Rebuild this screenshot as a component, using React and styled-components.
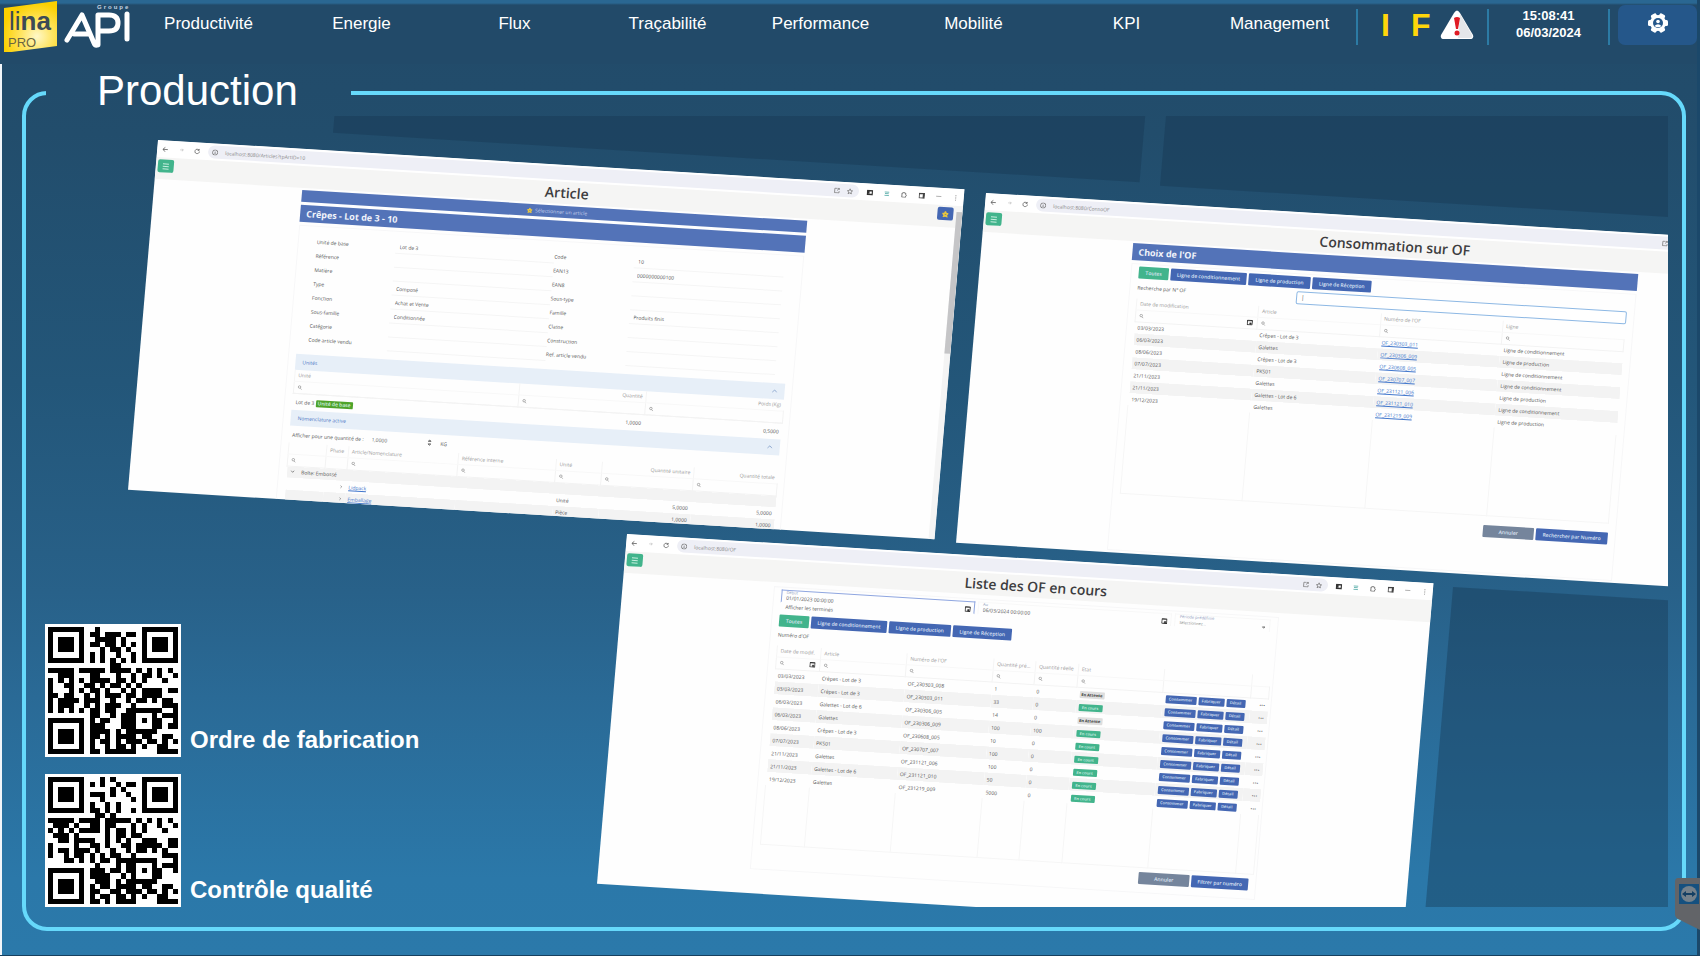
import styled, { createGlobalStyle, css } from "styled-components";

const GlobalStyle = createGlobalStyle`
  * {
    box-sizing: border-box;
  }
  body {
    margin: 0;
    background: #2b79aa;
    font-family: "Liberation Sans", Arial, sans-serif;
  }
  button,
  input,
  select {
    font-family: inherit;
    margin: 0;
  }
`;

/* ---------- page shell ---------- */

const Page = styled.div`
  min-height: 100vh;
  display: flex;
  flex-direction: column;
  overflow: hidden;
  background: linear-gradient(
    #224a69 0%,
    #224d6c 14%,
    #235679 40%,
    #286189 62%,
    #2a6a96 73%,
    #2b78a9 92%,
    #2b79aa 100%
  );
  border-right: 3px solid #1b486a;
  border-bottom: 1px solid #17405f;
`;

const Header = styled.header`
  height: 64px;
  display: flex;
  align-items: flex-start;
  background: linear-gradient(#2a6792 0, #2a6792 3px, #224a69 5px);
`;

const Brand = styled.a`
  flex: none;
  width: 132px;
  height: 52px;
`;

const Nav = styled.nav`
  flex: 1;
  display: grid;
  grid-template-columns: repeat(8, 1fr);
  padding-top: 13px;
`;

const NavLink = styled.a`
  color: #fff;
  font-size: 17px;
  line-height: 21px;
  text-align: center;
  text-decoration: none;
`;

const HeaderCell = styled.div`
  height: 36px;
  margin-top: 9px;
  padding-bottom: 6px;
  display: flex;
  align-items: center;
  justify-content: center;
  width: ${({ $width }) => $width}px;
  border-left: 2px solid #2c7ba5;
`;

const Flags = styled(HeaderCell)`
  display: grid;
  grid-template-columns: 30px 29px 34px;
  justify-content: start;
  padding-left: 23px;
`;

const Flag = styled.button`
  border: 0;
  padding: 0;
  background: none;
  color: #ffd60a;
  font-size: 32px;
  line-height: 32px;
  font-weight: 700;
  text-align: left;
`;

const Clock = styled.time`
  color: #fff;
  font-size: 13px;
  line-height: 17px;
  font-weight: 700;
  text-align: center;
`;

const SettingsButton = styled.button`
  width: 79px;
  height: 40px;
  margin-top: 5px;
  padding: 0 0 4px;
  border: 0;
  border-radius: 7px;
  background: #25578a;
  display: flex;
  align-items: center;
  justify-content: center;
`;

const Main = styled.main`
  flex: 1;
  display: flex;
  padding: 6px 11px 24px 20px;
  border-left: 2px solid #f2f6fa;
`;

const Panel = styled.fieldset`
  flex: 1;
  min-width: 0;
  display: flex;
  margin: 0;
  padding: 0;
  border: 4px solid #66d9fb;
  border-radius: 25px;
`;

const PanelTitle = styled.legend`
  margin-left: 20px;
  padding: 0 53px 4px 51px;
  color: #fff;
  font-size: 42px;
  line-height: 42px;
`;

const Board = styled.div`
  flex: 1;
  min-width: 0;
  display: grid;
  grid-template: 1fr / 1fr;
  padding: 0 14px 20px 0;
`;

const Canvas = styled.div`
  grid-area: 1 / 1;
  position: relative;
  overflow: hidden;
`;

const Codes = styled.div`
  grid-area: 1 / 1;
  align-self: end;
  justify-self: start;
  position: relative;
  display: grid;
  gap: 17px;
  padding-left: 19px;
`;

const CodeItem = styled.figure`
  margin: 0;
  display: flex;
  align-items: flex-end;
  gap: 9px;
`;

const CodeLabel = styled.figcaption`
  color: #fff;
  font-size: 24px;
  line-height: 35px;
  font-weight: 700;
`;

const RemoteTab = styled.button`
  position: absolute;
  right: 0;
  top: 877px;
  width: 26px;
  height: 54px;
  padding: 0;
  border: 0;
  background: none;
`;

/* ---------- tilted browser windows ---------- */

const tilted = css`
  position: absolute;
  left: ${({ $x }) => $x}px;
  top: ${({ $y }) => $y}px;
  width: 808px;
  height: 351px;
  transform: rotate(3.5deg) skewX(-1.4deg);
  transform-origin: 0 0;
`;

const Ghost = styled.div`
  ${tilted}
  background: rgba(22, 52, 78, 0.38);
`;

const Browser = styled.section`
  ${tilted}
  overflow: hidden;
  background: #fefefe;
  color: #555;
  font: 5px/8px "Open Sans", "Noto Sans", sans-serif;
`;

const Chrome = styled.div`
  height: 17px;
  display: flex;
  align-items: center;
  justify-content: space-between;
  padding: 0 5px;
  background: #fff;
`;

const ChromeIcons = styled.div`
  width: ${({ $width }) => $width}px;
  display: flex;
  align-items: center;
  justify-content: space-between;
`;

const AddressBar = styled.div`
  flex: 1;
  height: 13px;
  margin: 0 8px;
  padding: 0 6px 0 4px;
  display: flex;
  align-items: center;
  gap: 7px;
  border-radius: 7px;
  background: #eeeff6;
  color: #888;
`;

const Spacer = styled.span`
  flex: 1;
`;

const Banner = styled.div`
  height: 22px;
  display: flex;
  justify-content: space-between;
  padding: 2px 8px 0 2px;
  background: #f5f5f4;
`;

const BannerTitle = styled.h2`
  margin: 0;
  padding-left: 22px;
  color: #3d3d3f;
  font-size: 14px;
  line-height: 17px;
  font-weight: 600;
`;

const BannerSide = styled.div`
  width: 17px;
`;

const IconButton = styled.button`
  width: 16px;
  height: 13px;
  display: flex;
  align-items: center;
  justify-content: center;
  padding: 0;
  border: 0;
  border-radius: 2px;
  background: ${({ $color }) => $color};
`;

const Viewport = styled.div`
  display: flex;
  height: 313px;
`;

const Scrollbar = styled.div`
  width: 6px;
  margin-top: -16px;
  border-top: 142px solid #c5c5c7;
  background: #f4f4f4;
`;

const Card = styled.div`
  width: 506px;
  margin: ${({ $top }) => $top}px auto 0;
`;

const TitleBar = styled.div`
  display: flex;
  align-items: center;
  justify-content: ${({ $center }) => ($center ? "center" : "flex-start")};
  gap: 3px;
  height: ${({ $height }) => $height}px;
  margin-bottom: 3px;
  padding-left: 6px;
  background: #5373b8;
  color: ${({ $center }) => ($center ? "#c5d0ea" : "#f1f4fb")};
  font-size: ${({ $center }) => ($center ? 5 : 9)}px;
  font-weight: ${({ $center }) => ($center ? 400 : 700)};
`;

const CardBody = styled.div`
  height: ${({ $height }) => $height}px;
  padding: 2px 7px 0;
  border: 1px solid #f7f7f8;
`;

const ButtonRow = styled.div`
  display: flex;
  gap: 2px;
  justify-content: ${({ $end }) => ($end ? "flex-end" : "flex-start")};
  margin-top: ${({ $top }) => $top || 0}px;
`;

const Button = styled.button`
  width: ${({ $width }) => $width}px;
  height: ${({ $small }) => ($small ? 8 : 12)}px;
  padding: 0;
  border: 0;
  border-radius: 1px;
  background: ${({ $color }) => $color || "#4467b3"};
  color: #dfe6f5;
  font-size: ${({ $small }) => ($small ? 4 : 5)}px;
  font-weight: 600;
  line-height: 8px;
  white-space: nowrap;
`;

const Form = styled.div`
  display: grid;
  grid-template-columns: 79px 159px 80px 150px;
  grid-auto-flow: column;
  grid-template-rows: repeat(8, 14px);
  padding: 6px 0 8px 11px;
`;

const FieldLabel = styled.label`
  align-self: center;
`;

const FieldInput = styled.input`
  width: 100%;
  padding: 0 4px;
  border: 0;
  border-bottom: 1px solid #f5f5f5;
  background: none;
  color: #555;
  font-size: 5px;
`;

const Section = styled.div`
  height: 16px;
  display: flex;
  align-items: center;
  justify-content: space-between;
  padding: 0 7px;
  background: #e7eff8;
  color: #4a74c4;
`;

const Quantity = styled.label`
  height: 17px;
  display: flex;
  align-items: center;
  gap: 8px;
  padding-left: 3px;
`;

const QuantityInput = styled.input`
  width: 46px;
  padding: 0;
  border: 0;
  background: none;
  color: #666;
  font-size: 5px;
`;

const Table = styled.table`
  width: 100%;
  table-layout: fixed;
  border-collapse: collapse;
  tbody tr {
    height: ${({ $row }) => $row}px;
  }
  tbody tr:nth-child(${({ $stripe }) => $stripe || "even"}) {
    background: #f3f3f3;
  }
`;

const Th = styled.th`
  height: 11px;
  padding: 0 3px;
  overflow: hidden;
  color: #999;
  font-weight: 400;
  text-align: ${({ $align }) => $align || "left"};
  text-overflow: ellipsis;
  white-space: nowrap;
  border-left: 1px solid #f5f5f5;
`;

const Filter = styled.td`
  height: 12px;
  padding: 0 4px 0 3px;
  border: 1px solid #f3f3f3;
  border-top-color: #f8f8f8;
  > div {
    display: flex;
    align-items: center;
    justify-content: space-between;
  }
`;

const Td = styled.td`
  padding: 0 3px;
  overflow: hidden;
  text-align: ${({ $align }) => $align || "left"};
  white-space: nowrap;
`;

const FillerRow = styled.tr`
  &&&& {
    height: ${({ $height }) => $height}px;
    background: none;
  }
  td {
    border: 1px solid #f6f6f6;
    border-top: 0;
  }
`;

const Link = styled.a`
  color: #4277cc;
`;

const Badge = styled.span`
  display: inline-block;
  min-width: 24px;
  padding: 0 2px;
  border-radius: 1px;
  background: ${({ $color }) => $color || "#42b48c"};
  color: ${({ $dark }) => ($dark ? "#333" : "#d9f3e9")};
  font-size: ${({ $big }) => ($big ? 5 : 4)}px;
  font-weight: ${({ $dark }) => ($dark ? 700 : 600)};
  line-height: 7px;
  text-align: center;
`;

const SearchField = styled.div`
  display: flex;
  align-items: center;
  justify-content: space-between;
  height: 18px;
`;

const SearchInput = styled.input`
  width: 331px;
  height: 13px;
  padding: 0 4px;
  border: 1px solid #8db8e4;
  border-radius: 2px;
  background: #fff;
  color: #555;
  font-size: 6px;
`;

const Period = styled.div`
  display: grid;
  grid-template-columns: 194px 194px 1fr;
  gap: 3px;
`;

const DateBox = styled.label`
  height: 13px;
  display: flex;
  flex-wrap: wrap;
  align-items: center;
  justify-content: space-between;
  padding: 0 3px 0 4px;
  border: 1px solid ${({ $active }) => ($active ? "#8fa6e0" : "#f8f8f8")};
  border-bottom-color: transparent;
`;

const Caption = styled.span`
  width: 100%;
  color: #8f9bbd;
  font-size: 4px;
  line-height: 3px;
`;

const DateInput = styled.input`
  width: 90px;
  padding: 0;
  border: 0;
  background: none;
  color: #555;
  font-size: 5px;
  line-height: 7px;
`;

const PeriodSelect = styled.select`
  width: 76px;
  height: 8px;
  padding: 0;
  border: 0;
  appearance: none;
  background: none;
  color: #888;
  font-size: 4px;
`;

const Note = styled.p`
  margin: ${({ $top }) => $top || 0}px 0 0;
  padding-left: ${({ $indent }) => $indent || 0}px;
  height: ${({ $height }) => $height || 8}px;
`;

/* ---------- drawings ---------- */

const Stroke = ({ d, size = 6, color = "#555", width = 2 }) => (
  <svg
    width={size}
    height={size}
    viewBox="0 0 16 16"
    fill="none"
    stroke={color}
    strokeWidth={width}
    aria-hidden="true"
  >
    <path d={d} />
  </svg>
);

const icons = {
  back: "M15 8H2M8 2L2 8l6 6",
  forward: "M3 8h10M9 4l4 4-4 4",
  reload: "M14 8a6 6 0 1 1-2-4.500M13 1v4H9",
  info: "M8 1a7 7 0 1 0 0 14A7 7 0 0 0 8 1M8 7v5M8 4v1",
  share: "M9 2H2v12h12V9M8 8l6-6M10 2h4v4",
  star: "M8 1l2 5 5 .500-4 3.500 1.500 5L8 12l-4.500 3L5 10 1 6.500 6 6z",
  puzzle: "M3 4h3a2 2 0 0 1 4 0h3v4a2 2 0 0 1 0 4v3H3z",
  dots: "M8 1v3M8 7v3M8 13v3",
  search: "M7 2a4 4 0 1 0 0 8 4 4 0 0 0 0-8M10 10l4 4",
  up: "M2 11l6-6 6 6",
  down: "M3 6l5 5 5-5",
  right: "M6 3l5 5-5 5",
  menu: "M2 3h12M2 8h12M2 13h12",
};

const Calendar = () => (
  <svg width="6" height="6" viewBox="0 0 12 12" aria-hidden="true">
    <rect x="1" y="2" width="10" height="9" rx="1" fill="none" stroke="#333" strokeWidth="2" />
    <path d="M1 3h10M6 7h3v3H6z" fill="#333" stroke="#333" />
  </svg>
);

const BrandLogo = () => (
  <svg width="132" height="52" viewBox="0 0 132 52" role="img" aria-label="lina PRO, Groupe API">
    <defs>
      <radialGradient id="glow" cx="62%" cy="68%" r="65%">
        <stop offset="0" stopColor="#fff8c8" />
        <stop offset="0.450" stopColor="#ffe564" />
        <stop offset="1" stopColor="#fbd000" />
      </radialGradient>
    </defs>
    <path d="M4 8L57 1v45L4 53z" fill="url(#glow)" />
    <text x="9" y="30" fontFamily="Liberation Sans, sans-serif" fontSize="26" fill="#3c4a55">
      li<tspan fontWeight="700">na</tspan>
    </text>
    <text x="8" y="47" fontFamily="Liberation Sans, sans-serif" fontSize="13" fill="#6b6540">
      PRO
    </text>
    <text x="97" y="9" fontFamily="Liberation Sans, sans-serif" fontSize="6" fontWeight="700" letterSpacing="2" fill="#c8d6e2">
      Groupe
    </text>
    <g fill="none" stroke="#fff" strokeWidth="5" strokeLinejoin="round" strokeLinecap="round">
      <path d="M67 40L82 15L94 43Q95 46 98 45V15H109Q118 15 118 23T109 31H101" />
      <path d="M74 34h14" />
      <path d="M127 14v25" />
    </g>
  </svg>
);

const WarningIcon = () => (
  <svg width="34" height="30" viewBox="0 0 34 30" role="img" aria-label="Alerte">
    <path d="M14 3q3-5 6 0l13 22q1 4-3 4H4q-4 0-3-4z" fill="#fff" />
    <path d="M20 4l12 21q1 3-2 3H18z" fill="#e4e6e9" />
    <path d="M14 8q3-2 6 0l-2 11h-2z" fill="#e01b24" />
    <circle cx="17" cy="23" r="2.500" fill="#e01b24" />
  </svg>
);

const teeth = [0, 60, 120, 180, 240, 300];

const GearIcon = () => (
  <svg width="22" height="20" viewBox="-11 -10 22 20" aria-hidden="true">
    <circle r="8" fill="#fff" />
    {teeth.map((angle) => (
      <rect key={angle} x="-3" y="-10" width="6" height="6" rx="1.500" fill="#fff" transform={`rotate(${angle + 30})`} />
    ))}
    <circle r="5" fill="#25578a" />
    <circle cy="-1.500" r="1.800" fill="#fff" />
    <path d="M-3.500 3q3.500-3.500 7 0q-3.500 2.500-7 0" fill="#fff" />
  </svg>
);

const RemoteIcon = () => (
  <svg width="26" height="54" viewBox="0 0 26 54" aria-hidden="true">
    <path d="M4 1h22v52L6 43q-5-2-5-6V5q0-4 3-4z" fill="#626468" />
    <rect x="5" y="7" width="20" height="20" fill="#15507f" />
    <circle cx="15" cy="17" r="8" fill="#75818b" />
    <path d="M8 17l4-3v2h6v-2l4 3-4 3v-2h-6v2z" fill="#153f63" />
  </svg>
);

// columns 8-16 of the top rows, full middle rows, columns 8-24 of the bottom rows
const orderCode = {
  top: [".#.......", "##.###.##", ".####.#..", "##.##.#.#", "..#.##.#.", "#.#..#..#", "#.#.#.#.#", "....##..."],
  middle: [
    "#####.#####.####.#.#.#.#.",
    "..###...##...#..#.##.#..#",
    "#.#.#.#.####.##.#.#...#..",
    "#..##..##.#.##.#.#.......",
    "#...#.#.##.#..#.#.####.##",
    "##.##..#.#.###.##.####...",
    "#.####.###..#..#.##.#.##.",
    "#.###..#.#.###..#.....###",
    "#.#.#.#.##.##..#######..#",
  ],
  bottom: [
    "##..#.###...#.###",
    "#.##..###.#.##..#",
    "###...###...##.##",
    "####.#.######....",
    "##.#.####.##..##.",
    "#.##.#.###.##.#.#",
    "#..#.##.#.#..##..",
    "##.######....####",
  ],
};

const qualityCode = {
  top: ["..#.#....", "#.#..#.##", "....#.#..", "###.#..#.", "..#.....#", "#..#.#...", "##.#.#..#", ".##.#...."],
  middle: [
    "#####.####.#####.#.#.#.#.",
    ".###.#..##.##...#.#..#..#",
    "#.#.#.####.#.##.#.#...#..",
    ".###.#.....#.##.##.......",
    "..##.####..#.#.#..###..##",
    "#....#..##.#..##.#####.##",
    "#.##.###.#..#..#.##.#.#..",
    "#..#.##.#.#.##..#.....###",
    "...##.#.#.##.########...#",
  ],
  bottom: [
    ".#...#.##...#.###",
    "###.##.##.#.##..#",
    "####..#.#...##...",
    ".###.#.######....",
    "#.##.####.##..##.",
    "##..##.###.##.#.#",
    "#.##.##.#.#..##..",
    "##.#.####....####",
  ],
};

const Finder = ({ x, y }) => (
  <g transform={`translate(${x} ${y})`}>
    <path d="M0 0h7v7H0z" fill="#000" />
    <path d="M1 1h5v5H1z" fill="#fff" />
    <path d="M2 2h3v3H2z" fill="#000" />
  </g>
);

const QrCode = ({ code, label }) => {
  const cells = [];
  const add = (line, row, offset) =>
    [...line].forEach((cell, i) => {
      if (cell === "#") cells.push(`M${i + offset} ${row}h1v1h-1z`);
    });
  code.top.forEach((line, i) => add(line, i, 8));
  code.middle.forEach((line, i) => add(line, i + 8, 0));
  code.bottom.forEach((line, i) => add(line, i + 17, 8));
  return (
    <svg width="136" height="133" viewBox="-0.600 -0.600 26.200 26.200" preserveAspectRatio="none" shapeRendering="crispEdges" role="img" aria-label={label}>
      <path d="M-1-1h28v28H-1z" fill="#fff" />
      <path d={cells.join("")} fill="#000" />
      <Finder x={0} y={0} />
      <Finder x={18} y={0} />
      <Finder x={0} y={18} />
    </svg>
  );
};

/* ---------- window contents ---------- */

const menu = [
  "Productivité",
  "Energie",
  "Flux",
  "Traçabilité",
  "Performance",
  "Mobilité",
  "KPI",
  "Management",
];

const lines = [
  ["Ligne de conditionnement", 76],
  ["Ligne de production", 62],
  ["Ligne de Réception", 59],
];

const leftFields = [
  ["Unité de base", "Lot de 3"],
  ["Référence", ""],
  ["Matière", ""],
  ["Type", "Composé"],
  ["Fonction", "Achat et Vente"],
  ["Sous-famille", "Conditionnée"],
  ["Catégorie", ""],
  ["Code article vendu", ""],
];

const rightFields = [
  ["Code", "10"],
  ["EAN13", "0000000000100"],
  ["EAN8", ""],
  ["Sous-type", ""],
  ["Famille", "Produits finis"],
  ["Classe", ""],
  ["Construction", ""],
  ["Ref. article vendu", ""],
];

const consumptionRows = [
  ["03/03/2023", "Crêpes - Lot de 3", "OF_230303_011", "Ligne de conditionnement"],
  ["06/03/2023", "Galettes", "OF_230306_009", "Ligne de production"],
  ["08/06/2023", "Crêpes - Lot de 3", "OF_230608_005", "Ligne de conditionnement"],
  ["07/07/2023", "PKS01", "OF_230707_007", "Ligne de conditionnement"],
  ["21/11/2023", "Galettes", "OF_231121_006", "Ligne de production"],
  ["21/11/2023", "Galettes - Lot de 6", "OF_231121_010", "Ligne de conditionnement"],
  ["19/12/2023", "Galettes", "OF_231219_009", "Ligne de production"],
];

const orderRows = [
  ["03/03/2023", "Crêpes - Lot de 3", "OF_230303_008", "1", "0", false],
  ["03/03/2023", "Crêpes - Lot de 3", "OF_230303_011", "33", "0", true],
  ["06/03/2023", "Galettes - Lot de 6", "OF_230306_005", "14", "0", false],
  ["06/03/2023", "Galettes", "OF_230306_009", "100", "100", true],
  ["08/06/2023", "Crêpes - Lot de 3", "OF_230608_005", "10", "0", true],
  ["07/07/2023", "PKS01", "OF_230707_007", "100", "0", true],
  ["21/11/2023", "Galettes", "OF_231121_006", "100", "0", true],
  ["21/11/2023", "Galettes - Lot de 6", "OF_231121_010", "50", "0", true],
  ["19/12/2023", "Galettes", "OF_231219_009", "5000", "0", true],
];

const Columns = ({ widths }) => (
  <colgroup>
    {widths.map((width, i) => (
      <col key={i} width={width} />
    ))}
  </colgroup>
);

const Filters = ({ count, calendar, empty = [] }) => (
  <tr>
    {Array.from({ length: count }, (_, i) => (
      <Filter key={i}>
        <div>
          {!empty.includes(i) && <Stroke d={icons.search} size={5} color="#888" />}
          {calendar && i === 0 && <Calendar />}
        </div>
      </Filter>
    ))}
  </tr>
);

const Fields = ({ items, prefix }) => (
  <>
    {items.map(([label]) => (
      <FieldLabel key={label} htmlFor={`${prefix}-${label}`}>
        {label}
      </FieldLabel>
    ))}
    {items.map(([label, value]) => (
      <FieldInput key={label} id={`${prefix}-${label}`} defaultValue={value} />
    ))}
  </>
);

const LineButtons = ({ top }) => (
  <ButtonRow $top={top}>
    <Button $width={30} $color="#42b48c">
      Toutes
    </Button>
    {lines.map(([label, width]) => (
      <Button key={label} $width={width}>
        {label}
      </Button>
    ))}
  </ButtonRow>
);

const BrowserWindow = ({ x, y, url, title, starred, children }) => (
  <Browser $x={x} $y={y}>
    <Chrome>
      <ChromeIcons $width={38}>
        <Stroke d={icons.back} />
        <Stroke d={icons.forward} size={5} color="#bbb" />
        <Stroke d={icons.reload} />
      </ChromeIcons>
      <AddressBar>
        <Stroke d={icons.info} color="#666" />
        {url}
        <Spacer />
        <Stroke d={icons.share} color="#777" />
        <Stroke d={icons.star} color="#777" />
      </AddressBar>
      <ChromeIcons $width={92}>
        <Stroke d="M1 3h14v10H1zM5 5v6" color="#333" width={4} />
        <Stroke d="M2 4h12M3 8h10M2 13h12" color="#4aa6a2" />
        <Stroke d={icons.puzzle} />
        <Stroke d="M1 2h14v12H1zM12 3v10" color="#444" width={3} />
        <Stroke d="M1 7h14" color="#999" />
        <Stroke d={icons.dots} color="#777" />
      </ChromeIcons>
    </Chrome>
    <Banner>
      <BannerSide>
        <IconButton $color="#42b48c" aria-label="Menu">
          <Stroke d={icons.menu} size={8} color="#c6eedf" />
        </IconButton>
      </BannerSide>
      <BannerTitle>{title}</BannerTitle>
      <BannerSide>
        {starred && (
          <IconButton $color="#4467b3" aria-label="Favori">
            <Stroke d={icons.star} size={6} color="#e8c63f" width={4} />
          </IconButton>
        )}
      </BannerSide>
    </Banner>
    {children}
  </Browser>
);

const ArticleWindow = () => (
  <BrowserWindow x={132} y={24} url="localhost:8080/Articles?tpArtID=10" title="Article" starred>
    <Viewport>
      <Card $top={2}>
        <TitleBar $center $height={12}>
          <Stroke d={icons.star} size={5} color="#e8c63f" width={4} />
          Sélectionner un article
        </TitleBar>
        <TitleBar $height={17}>Crêpes - Lot de 3 - 10</TitleBar>
        <CardBody $height={290}>
          <Form>
            <Fields items={leftFields} prefix="left" />
            <Fields items={rightFields} prefix="right" />
          </Form>
          <Section>
            Unités
            <Stroke d={icons.up} color="#7f9cc9" />
          </Section>
          <Table $row={17}>
            <Columns widths={[225, 127, 138]} />
            <thead>
              <tr>
                <Th>Unité</Th>
                <Th $align="right">Quantité</Th>
                <Th $align="right">Poids (Kg)</Th>
              </tr>
              <Filters count={3} />
            </thead>
            <tbody>
              <tr>
                <Td>
                  Lot de 3{" "}
                  <Badge $big $color="#4ea32a">
                    Unité de base
                  </Badge>
                </Td>
                <Td $align="right">1,0000</Td>
                <Td $align="right">0,5000</Td>
              </tr>
            </tbody>
          </Table>
          <Section>
            Nomenclature active
            <Stroke d={icons.up} color="#7f9cc9" />
          </Section>
          <Quantity>
            Afficher pour une quantité de :
            <QuantityInput defaultValue="1,0000" />
            <Stroke d="M5 5l3-3 3 3zM5 11l3 3 3-3z" color="#555" size={7} />
            KG
          </Quantity>
          <Table $row={12} $stripe="odd">
            <Columns widths={[38, 22, 110, 98, 46, 92, 84]} />
            <thead>
              <tr>
                <Th />
                <Th>Phase</Th>
                <Th>Article/Nomenclature</Th>
                <Th>Référence interne</Th>
                <Th>Unité</Th>
                <Th $align="right">Quantité unitaire</Th>
                <Th $align="right">Quantité totale</Th>
              </tr>
              <Filters count={7} empty={[1]} />
            </thead>
            <tbody>
              <tr>
                <Td colSpan={7}>
                  <Stroke d={icons.down} size={5} /> &nbsp; &nbsp; Boîte: Embossé
                </Td>
              </tr>
              <tr>
                <Td />
                <Td $align="right">
                  <Stroke d={icons.right} size={4} />
                </Td>
                <Td>
                  <Link href="#lidpack">Lidpack</Link>
                </Td>
                <Td />
                <Td>Unité</Td>
                <Td $align="right">5,0000</Td>
                <Td $align="right">5,0000</Td>
              </tr>
              <tr>
                <Td />
                <Td $align="right">
                  <Stroke d={icons.right} size={4} />
                </Td>
                <Td>
                  <Link href="#emballage">Emballage</Link>
                </Td>
                <Td />
                <Td>Pièce</Td>
                <Td $align="right">1,0000</Td>
                <Td $align="right">1,0000</Td>
              </tr>
            </tbody>
          </Table>
        </CardBody>
      </Card>
      <Scrollbar />
    </Viewport>
  </BrowserWindow>
);

const ConsumptionWindow = () => (
  <BrowserWindow x={960} y={77} url="localhost:8080/ConsoOF" title="Consommation sur OF">
    <Card $top={2}>
      <TitleBar $height={17}>Choix de l'OF</TitleBar>
      <CardBody $height={288}>
        <LineButtons />
        <SearchField>
          <label htmlFor="of">Recherche par N° OF</label>
          <SearchInput id="of" defaultValue="|" />
        </SearchField>
        <Note $height={2} />
        <Table $row={12}>
          <thead>
            <tr>
              <Th>Date de modification</Th>
              <Th>Article</Th>
              <Th>Numéro de l'OF</Th>
              <Th>Ligne</Th>
            </tr>
            <Filters count={4} calendar />
          </thead>
          <tbody>
            {consumptionRows.map(([date, article, order, line]) => (
              <tr key={order}>
                <Td>{date}</Td>
                <Td>{article}</Td>
                <Td>
                  <Link href={`#${order}`}>{order}</Link>
                </Td>
                <Td>{line}</Td>
              </tr>
            ))}
            <FillerRow $height={88}>
              <td />
              <td />
              <td />
              <td />
            </FillerRow>
          </tbody>
        </Table>
        <ButtonRow $end $top={9}>
          <Button $width={51} $color="#75859c">
            Annuler
          </Button>
          <Button $width={72}>Rechercher par Numéro</Button>
        </ButtonRow>
      </CardBody>
    </Card>
  </BrowserWindow>
);

const OrdersWindow = () => (
  <BrowserWindow x={601} y={418} url="localhost:8080/OF" title="Liste des OF en cours">
    <Card $top={4}>
      <CardBody $height={284}>
        <Period>
          <DateBox $active>
            <Caption>Début</Caption>
            <DateInput defaultValue="01/01/2023 00:00:00" />
            <Calendar />
          </DateBox>
          <DateBox>
            <Caption>Au</Caption>
            <DateInput defaultValue="06/03/2024 00:00:00" />
            <Calendar />
          </DateBox>
          <DateBox>
            <Caption>Période prédéfinie</Caption>
            <PeriodSelect>
              <option>Sélectionnez...</option>
            </PeriodSelect>
            <Stroke d="M4 6h8l-4 4z" size={5} color="#444" />
          </DateBox>
        </Period>
        <Note $indent={5} $height={10}>
          Afficher les terminés
        </Note>
        <LineButtons top={2} />
        <Note $top={4} $height={15}>
          Numéro d'OF
        </Note>
        <Table $row={13}>
          <Columns widths={[44, 86, 87, 42, 43, 86, 88, 18]} />
          <thead>
            <tr>
              <Th>Date de modif.</Th>
              <Th>Article</Th>
              <Th>Numéro de l'OF</Th>
              <Th>Quantité prévue</Th>
              <Th>Quantité réelle</Th>
              <Th>Etat</Th>
              <Th />
              <Th />
            </tr>
            <Filters count={8} calendar empty={[6, 7]} />
          </thead>
          <tbody>
            {orderRows.map(([date, article, order, planned, done, running]) => (
              <tr key={order}>
                <Td>{date}</Td>
                <Td>{article}</Td>
                <Td>{order}</Td>
                <Td>{planned}</Td>
                <Td>{done}</Td>
                <Td>
                  {running ? (
                    <Badge>En cours</Badge>
                  ) : (
                    <Badge $dark $color="#dedede">
                      En Attente
                    </Badge>
                  )}
                </Td>
                <Td>
                  <ButtonRow>
                    <Button $small $width={31}>
                      Consommer
                    </Button>
                    <Button $small $width={26}>
                      Fabriquer
                    </Button>
                    <Button $small $width={19}>
                      Détail
                    </Button>
                  </ButtonRow>
                </Td>
                <Td $align="right">•••</Td>
              </tr>
            ))}
            <FillerRow $height={59}>
              {Array.from({ length: 8 }, (_, i) => (
                <td key={i} />
              ))}
            </FillerRow>
          </tbody>
        </Table>
        <ButtonRow $end $top={4}>
          <Button $width={51} $color="#75859c">
            Annuler
          </Button>
          <Button $width={57}>Filtrer par numéro</Button>
        </ButtonRow>
      </CardBody>
    </Card>
  </BrowserWindow>
);

const App = () => {
  return (
    <Page>
      <GlobalStyle />
      <Header>
        <Brand href="#accueil">
          <BrandLogo />
        </Brand>
        <Nav>
          {menu.map((item) => (
            <NavLink key={item} href={`#${item}`}>
              {item}
            </NavLink>
          ))}
        </Nav>
        <Flags $width={131}>
          <Flag>I</Flag>
          <Flag>F</Flag>
          <WarningIcon />
        </Flags>
        <HeaderCell $width={121}>
          <Clock>
            15:08:41
            <br />
            06/03/2024
          </Clock>
        </HeaderCell>
        <HeaderCell $width={10} />
        <SettingsButton aria-label="Paramètres">
          <GearIcon />
        </SettingsButton>
      </Header>
      <Main>
        <Panel>
          <PanelTitle>Production</PanelTitle>
          <Board>
            <Canvas>
              <Ghost $x={337} $y={-333} />
              <Ghost $x={1164} $y={-280} />
              <Ghost $x={1427} $y={471} />
              <ArticleWindow />
              <ConsumptionWindow />
              <OrdersWindow />
            </Canvas>
            <Codes>
              <CodeItem>
                <QrCode code={orderCode} label="QR code ordre de fabrication" />
                <CodeLabel>Ordre de fabrication</CodeLabel>
              </CodeItem>
              <CodeItem>
                <QrCode code={qualityCode} label="QR code contrôle qualité" />
                <CodeLabel>Contrôle qualité</CodeLabel>
              </CodeItem>
            </Codes>
          </Board>
        </Panel>
      </Main>
      <RemoteTab aria-label="Assistance à distance">
        <RemoteIcon />
      </RemoteTab>
    </Page>
  );
};

export default App;
